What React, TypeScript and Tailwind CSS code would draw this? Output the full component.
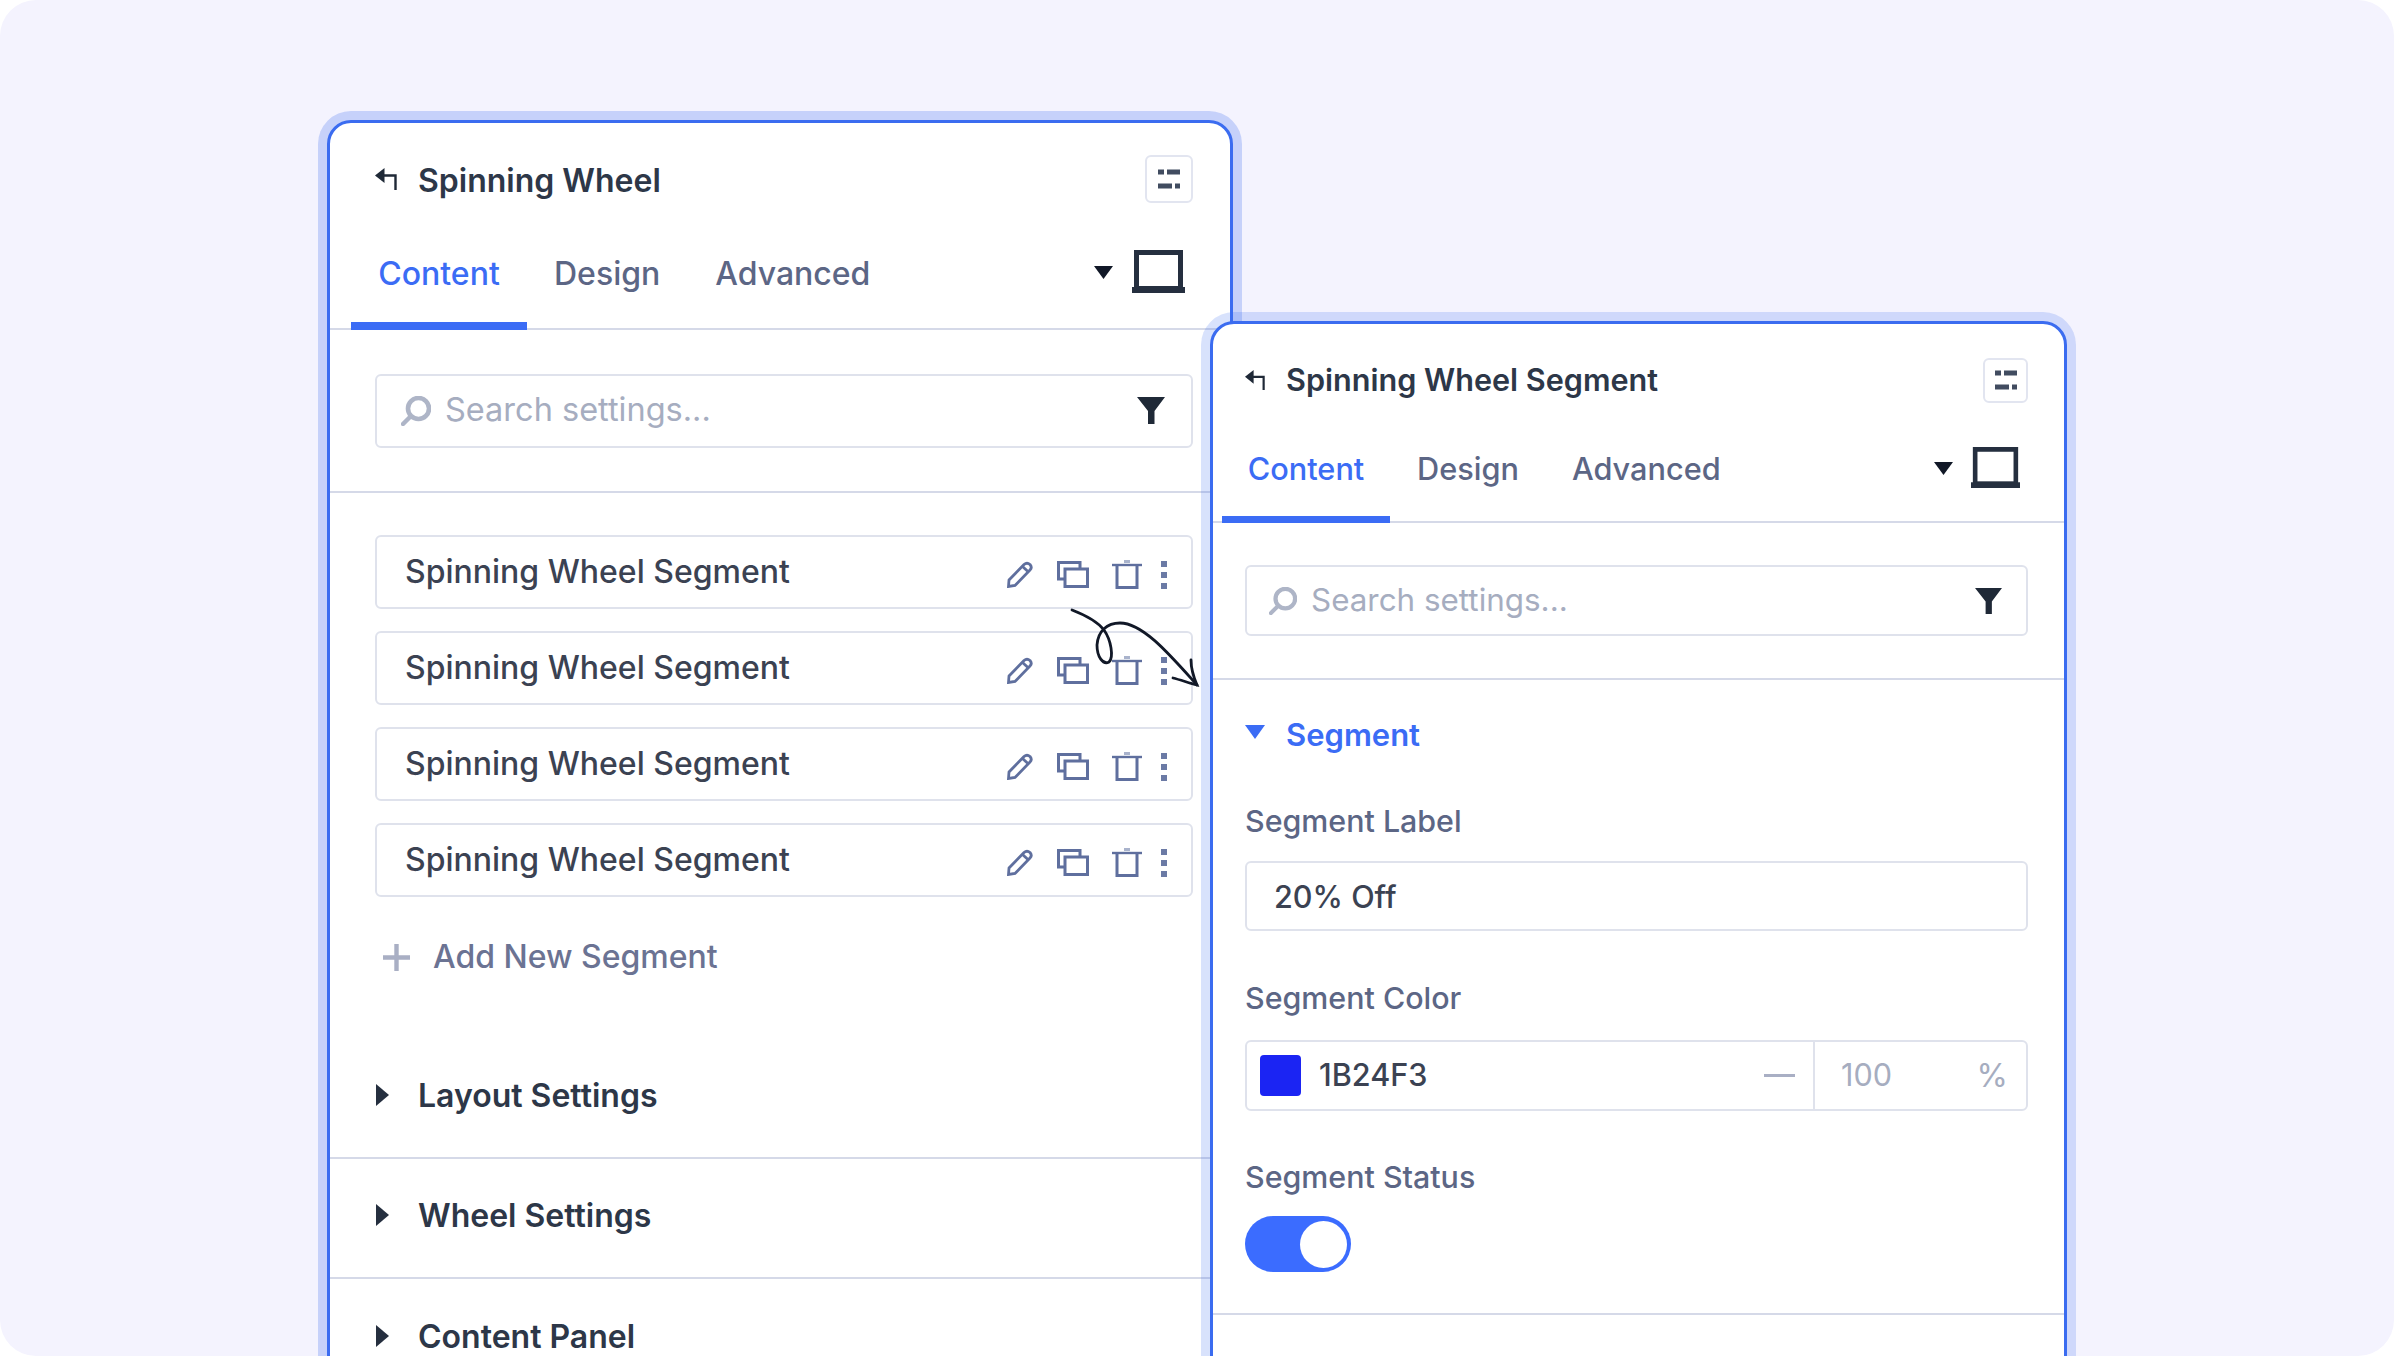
const FONT = "font-['Inter','Noto_Sans',sans-serif]";

function BackIcon({ className }: { className: string }) {
  return (
    <svg viewBox="0 0 22 22" className={className} fill="none">
      <path d="M9.5 0 L0 7.5 L9.5 15 Z" fill="#1f2937" />
      <path d="M8 7.5 H20.5 V22" stroke="#1f2937" strokeWidth="2.4" />
    </svg>
  );
}

function SettingsButton({ className }: { className: string }) {
  return (
    <div className={`flex items-center justify-center rounded-[6px] border-2 border-[#e2e5f0] bg-white ${className}`}>
      <svg viewBox="0 0 22 20" className="h-[20px] w-[22px]" fill="#414c60">
        <rect x="0" y="0.5" width="6" height="5" />
        <rect x="9" y="0.5" width="13" height="5" />
        <rect x="0" y="14.5" width="14" height="5" />
        <rect x="17" y="14.5" width="5" height="5" />
      </svg>
    </div>
  );
}

function Caret({ className, d, fill }: { className: string; d: string; fill: string }) {
  return (
    <svg viewBox="0 0 20 20" preserveAspectRatio="none" className={className}>
      <path d={d} fill={fill} />
    </svg>
  );
}

function Monitor({ className }: { className: string }) {
  return (
    <svg viewBox="0 0 53 43" preserveAspectRatio="none" className={className} fill="none">
      <rect x="4.5" y="2.5" width="44" height="36" stroke="#252f3f" strokeWidth="5" />
      <rect x="0" y="37" width="53" height="6" fill="#252f3f" />
    </svg>
  );
}

function SearchGlyph({ className }: { className: string }) {
  return (
    <svg viewBox="0 0 30 30" className={className} fill="none" stroke="#aeb5c7">
      <circle cx="17.5" cy="12.5" r="10.5" strokeWidth="4.6" />
      <path d="M9 21 L2 28" strokeWidth="4.4" strokeLinecap="round" />
    </svg>
  );
}

function FilterGlyph({ className }: { className: string }) {
  return (
    <svg viewBox="0 0 28 27" className={className}>
      <path d="M0 0 H28 L17.5 14 V27 H11 V14 Z" fill="#1f2937" />
    </svg>
  );
}

function RowIcons() {
  const stroke = "#5f6f9e";
  return (
    <div className="flex items-center pt-[5px]">
      <svg viewBox="0 0 26 27" className="h-[27px] w-[26px]" fill="none" stroke={stroke} strokeWidth="2.8">
        <path d="M2 19 L17 3.5 Q20 1 23 3.5 Q25.5 6.5 23 9 L8 24.5 L1.5 25.5 Z" />
        <path d="M15.5 5.5 L21.5 11" />
      </svg>
      <svg viewBox="0 0 32 27" className="ml-[24px] h-[27px] w-[32px]" fill="none" stroke={stroke} strokeWidth="3">
        <path d="M8 18 H1.5 V1.5 H23 V8" />
        <rect x="8" y="8" width="22.5" height="17.5" />
      </svg>
      <svg viewBox="0 0 30 29" className="ml-[23px] h-[29px] w-[30px]" fill="none" stroke={stroke}>
        <path d="M0 5 H30" strokeWidth="2.4" />
        <path d="M12 1.5 H18" strokeWidth="3" stroke="#a9b3cc" />
        <path d="M5 5 V27.5 H25 V5" strokeWidth="3" />
      </svg>
      <div className="ml-[19px] flex flex-col gap-[5px]">
        <span className="block size-[6px] bg-[#6b7aa5]" />
        <span className="block size-[6px] bg-[#6b7aa5]" />
        <span className="block size-[6px] bg-[#6b7aa5]" />
      </div>
    </div>
  );
}

function SegmentRow() {
  return (
    <div className="flex h-[74px] items-center justify-between rounded-[6px] border-2 border-[#dfe2ec] pl-[28px] pr-[24px]">
      <span className="text-[32px] leading-none font-medium text-[#3b4252]">Spinning Wheel Segment</span>
      <RowIcons />
    </div>
  );
}

function Accordion({ label, last }: { label: string; last?: boolean }) {
  return (
    <div className={`flex h-[120px] items-center pb-[4px] pl-[46px] ${last ? "" : "border-b-2 border-[#d5d9e8]"}`}>
      <Caret className="mb-[2px] h-[22px] w-[13px]" d="M0 0 L20 10 L0 20 Z" fill="#252f3f" />
      <span className="ml-[29px] text-[32px] leading-none font-semibold text-[#2d3748]">{label}</span>
    </div>
  );
}

function App() {
  return (
    <div className={`relative h-[1356px] w-[2394px] overflow-hidden bg-white ${FONT}`}>
      <div className="h-full w-full overflow-hidden rounded-[36px] bg-[#f4f3fe] pl-[327px] pt-[120px]">
        <section className="h-[1300px] w-[906px] rounded-[24px] border-[3px] border-[#3b6cf0] bg-white shadow-[0_0_0_9px_rgba(59,108,240,0.25)]">
          <header className="flex h-[112px] items-center justify-between pl-[45px] pr-[37px]">
            <div className="flex items-center">
              <BackIcon className="h-[22px] w-[22px]" />
              <span className="ml-[21px] pt-[3px] text-[32px] leading-none font-semibold text-[#2d3748]">Spinning Wheel</span>
            </div>
            <SettingsButton className="size-[48px]" />
          </header>
          <nav className="flex h-[95px] items-start justify-between border-b-2 border-[#d5d9e8] pl-[21px] pr-[45px]">
            <div className="flex text-[32px] leading-none font-medium">
              <div className="-mb-px flex h-[95px] w-[176px] items-start justify-center border-b-[8px] border-[#3b6cf5] pt-[23px] text-[#3b6cf5]">Content</div>
              <div className="ml-[27px] pt-[23px] text-[#5c6685]">Design</div>
              <div className="ml-[55px] pt-[23px] text-[#5c6685]">Advanced</div>
            </div>
            <div className="flex items-start">
              <Caret className="mt-[31px] h-[13px] w-[19px]" d="M0 0 H20 L10 20 Z" fill="#111827" />
              <Monitor className="ml-[19px] mt-[15px] h-[43px] w-[53px]" />
            </div>
          </nav>
          <div className="flex h-[163px] items-center border-b-2 border-[#d5d9e8] pl-[45px] pr-[37px]">
            <div className="flex h-[74px] w-full items-center rounded-[6px] border-2 border-[#dfe2ec] pl-[24px] pr-[26px]">
              <SearchGlyph className="h-[30px] w-[30px]" />
              <span className="ml-[14px] flex-1 text-[32.5px] leading-none text-[#a6adc0]">Search settings...</span>
              <FilterGlyph className="h-[27px] w-[28px]" />
            </div>
          </div>
          <div className="flex flex-col gap-[22px] pl-[45px] pr-[37px] pt-[42px]">
            <SegmentRow />
            <SegmentRow />
            <SegmentRow />
            <SegmentRow />
          </div>
          <div className="flex h-[120px] items-center pl-[53px] text-[32px] font-medium leading-none text-[#6b7393]">
            <svg viewBox="0 0 27 27" className="h-[27px] w-[27px]" stroke="#a9afc4" strokeWidth="4.4">
              <path d="M13.5 0 V27 M0 13.5 H27" />
            </svg>
            <span className="ml-[23px]">Add New Segment</span>
          </div>
          <div className="mt-[22px]">
            <Accordion label="Layout Settings" />
            <Accordion label="Wheel Settings" />
            <Accordion label="Content Panel" last />
          </div>
        </section>
      </div>

      <section className="absolute left-[1210px] top-[321px] h-[1100px] w-[857px] rounded-[24px] border-[3px] border-[#3b6cf0] bg-white shadow-[0_0_0_9px_rgba(59,108,240,0.2)]">
        <header className="flex h-[112px] items-center justify-between pl-[32px] pr-[36px]">
          <div className="flex items-center">
            <BackIcon className="h-[20px] w-[20px]" />
            <span className="ml-[21px] text-[30.6px] leading-none font-semibold text-[#2d3748]">Spinning Wheel Segment</span>
          </div>
          <SettingsButton className="size-[45px]" />
        </header>
        <nav className="flex h-[87px] items-start justify-between border-b-2 border-[#d5d9e8] pl-[9px] pr-[44px]">
          <div className="flex text-[30.7px] leading-none font-medium">
            <div className="-mb-px flex h-[87px] w-[168px] items-start justify-center border-b-[7px] border-[#3b6cf5] pt-[18px] text-[#3b6cf5]">Content</div>
            <div className="ml-[27px] pt-[18px] text-[#5c6685]">Design</div>
            <div className="ml-[53px] pt-[18px] text-[#5c6685]">Advanced</div>
          </div>
          <div className="flex items-start">
            <Caret className="mt-[26px] h-[13px] w-[19px]" d="M0 0 H20 L10 20 Z" fill="#111827" />
            <Monitor className="ml-[18px] mt-[11px] h-[41px] w-[49px]" />
          </div>
        </nav>
        <div className="flex h-[157px] items-center border-b-2 border-[#d5d9e8] pl-[32px] pr-[36px]">
          <div className="flex h-[71px] w-full items-center rounded-[6px] border-2 border-[#dfe2ec] pl-[22px] pr-[24px]">
            <SearchGlyph className="h-[28px] w-[28px]" />
            <span className="ml-[14px] flex-1 text-[31.4px] leading-none text-[#a6adc0]">Search settings...</span>
            <FilterGlyph className="h-[26px] w-[27px]" />
          </div>
        </div>
        <div className="flex flex-col pl-[32px] pr-[36px]">
          <div className="mt-[43px] flex h-[22px] items-center">
            <Caret className="mb-[4px] h-[14px] w-[20px]" d="M0 0 H20 L10 20 Z" fill="#3b6cf5" />
            <span className="ml-[21px] text-[31px] leading-none font-semibold text-[#3b6cf5]">Segment</span>
          </div>
          <label className="mt-[61px] text-[30.4px] font-medium leading-[30px] text-[#5c6685]">Segment Label</label>
          <div className="mt-[25px] flex h-[70px] items-center rounded-[6px] border-2 border-[#dfe2ec] pl-[27px] pt-[2px] text-[30.6px] font-medium leading-none text-[#3b4252]">20% Off</div>
          <label className="mt-[52px] text-[30.4px] font-medium leading-[30px] text-[#5c6685]">Segment Color</label>
          <div className="mt-[27px] flex h-[71px] items-center rounded-[6px] border-2 border-[#dfe2ec] text-[30.6px] leading-none">
            <div className="flex h-full flex-1 items-center border-r-2 border-[#dfe2ec] pl-[13px] pr-[18px]">
              <span className="block h-[41px] w-[41px] rounded-[4px] bg-[#1b24f3]" />
              <span className="ml-[18px] flex-1 font-medium text-[#3b4252]">1B24F3</span>
              <span className="block h-[3px] w-[31px] bg-[#a9afc4]" />
            </div>
            <div className="flex w-[211px] items-center justify-between pl-[26px] pr-[18px] text-[#a6adc0]">
              <span>100</span>
              <span className="text-[32px]">%</span>
            </div>
          </div>
          <label className="mt-[51px] text-[30.4px] font-medium leading-[30px] text-[#5c6685]">Segment Status</label>
          <div className="mt-[24px] flex h-[56px] w-[106px] items-center justify-end rounded-full bg-[#3b6cff] pr-[4px]">
            <span className="block h-[47px] w-[47px] rounded-full bg-white" />
          </div>
        </div>
        <div className="mt-[41px] border-t-2 border-[#d5d9e8]" />
      </section>

      <svg viewBox="0 0 140 90" className="pointer-events-none absolute left-[1065px] top-[605px] h-[90px] w-[140px]" fill="none" stroke="#111827" strokeWidth="2.8" strokeLinecap="round">
        <path d="M7 5 C20 10 32 16 39 25 C46 35 49 52 44 57 C38 60 32 52 32 40 C33 26 42 18 55 18 C78 18 105 50 132 80" />
        <path d="M126 55 C126 64 129 73 132 80 C124 78 116 75 108 73" />
      </svg>
    </div>
  );
}

export default App;
